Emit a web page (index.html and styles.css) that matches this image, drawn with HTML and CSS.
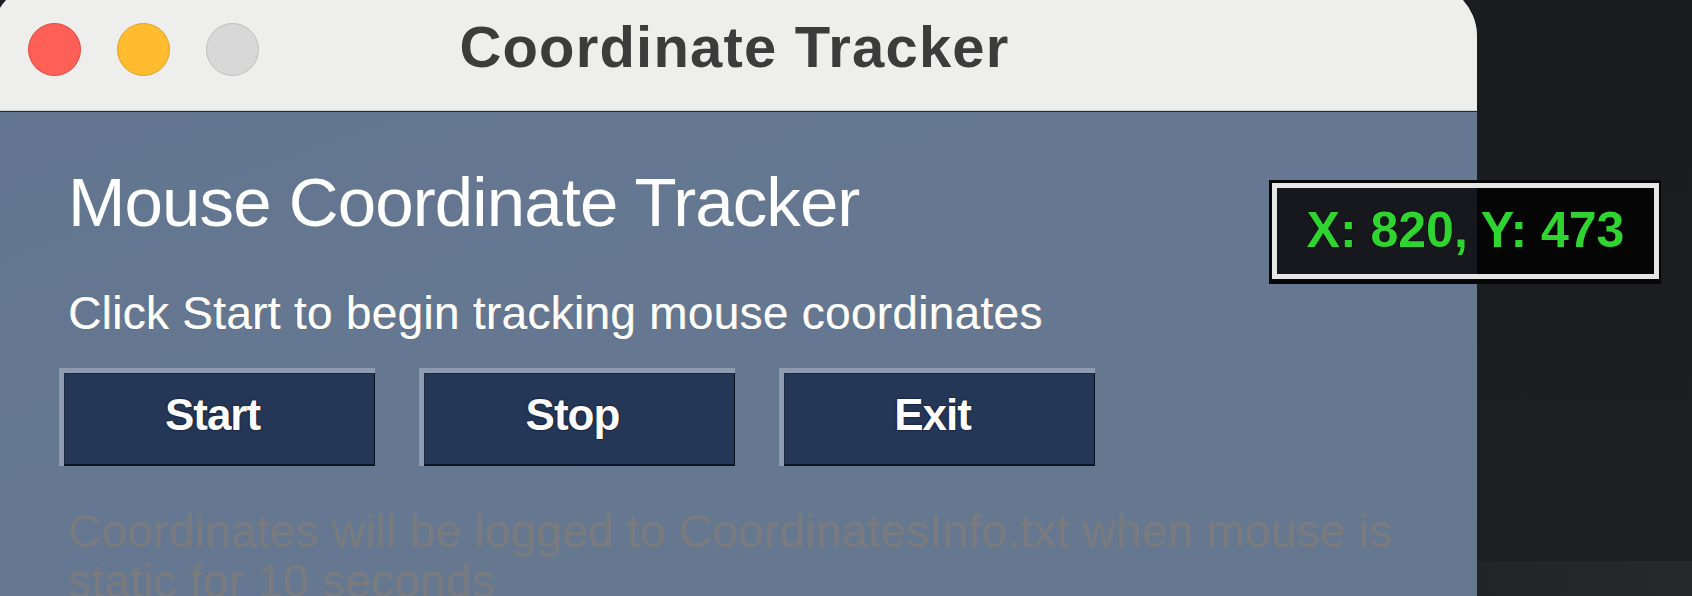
FILE: index.html
```html
<!DOCTYPE html>
<html lang="en">
<head>
<meta charset="utf-8">
<title>Coordinate Tracker</title>
<link rel="stylesheet" href="styles.css">
</head>
<body>
<div class="desk">
  <div class="window">
    <div class="titlebar">
      <div class="lights">
        <span class="light red"></span>
        <span class="light yellow"></span>
        <span class="light grey"></span>
      </div>
      <div class="wtitle">Coordinate Tracker</div>
      <div></div>
    </div>
    <div class="content">
      <h1 class="heading">Mouse Coordinate Tracker</h1>
      <p class="sub">Click Start to begin tracking mouse coordinates</p>
      <div class="buttons">
        <div class="btn">Start</div>
        <div class="btn">Stop</div>
        <div class="btn">Exit</div>
      </div>
      <p class="note">Coordinates will be logged to CoordinatesInfo.txt when mouse is static for 10 seconds</p>
    </div>
  </div>
  <div class="side">
    <div class="side-top"></div>
    <div class="side-band"></div>
  </div>
</div>
<div class="tip">
  <div class="tip-inner">X: 820, Y: 473</div>
</div>
</body>
</html>
```
FILE: styles.css
```css
html, body {
  margin: 0;
  padding: 0;
  width: 1692px;
  height: 596px;
  overflow: hidden;
  background: #1c1d20;
  font-family: "Liberation Sans", Arial, sans-serif;
}

.desk {
  display: flex;
  align-items: flex-start;
  height: 596px;
}

.window {
  flex: 0 0 1485px;
  width: 1485px;
  height: 613px;
  margin-top: -17px;
  margin-left: -8px;
  border-radius: 53px 53px 0 0;
  overflow: hidden;
  background: linear-gradient(160deg, #627590 0%, #667891 60%, #66788f 100%);
  box-shadow: 1px 0 0 #0e1116;
  display: flex;
  flex-direction: column;
}

.titlebar {
  height: 128px;
  flex: 0 0 128px;
  background: #eeeeed;
  border-bottom: 1px solid #cfcfcf;
  box-shadow: 0 1px 0 #1f2d44;
  display: grid;
  grid-template-columns: 1fr auto 1fr;
  align-items: center;
  padding-top: 4px;
  box-sizing: border-box;
  position: relative;
  z-index: 1;
}

.lights {
  display: flex;
  gap: 36px;
  padding-left: 36px;
  padding-top: 1px;
}

.light {
  width: 53px;
  height: 53px;
  border-radius: 50%;
  box-sizing: border-box;
}
.red { background: #fe5f57; border: 1px solid #e2463f; }
.yellow { background: #febc2e; border: 1px solid #dfa226; }
.grey { background: #d8d8d8; border: 1px solid #bfbfbf; }

.wtitle {
  font-weight: bold;
  font-size: 58px;
  letter-spacing: 1.2px;
  color: #3c3c3c;
  line-height: 66px;
  padding-bottom: 3px;
}

.content {
  padding: 52px 67px 0 67px;
  box-sizing: border-box;
}

.heading {
  margin: 0;
  padding-left: 9px;
  font-weight: normal;
  font-size: 69px;
  line-height: 80px;
  letter-spacing: -0.9px;
  color: #ffffff;
}

.sub {
  margin: 42px 0 0 0;
  padding-left: 9px;
  font-size: 46px;
  line-height: 56px;
  letter-spacing: 0.28px;
  color: #ffffff;
  text-shadow: 0 0 1px rgba(20, 30, 50, 0.6), 0.4px 0 0 #ffffff;
}

.buttons {
  margin-top: 27px;
  display: flex;
  gap: 44px;
}

.btn {
  width: 316px;
  height: 98px;
  box-sizing: border-box;
  border-top: 5px solid #8e9bb0;
  border-left: 5px solid #8e9bb0;
  background: #253757;
  box-shadow: inset -1px -2px 0 #0c1322, inset 1px 1px 0 #1a2842;
  display: flex;
  align-items: center;
  justify-content: center;
  padding-right: 14px;
  padding-bottom: 9px;
  color: #ffffff;
  font-weight: bold;
  font-size: 44px;
  letter-spacing: -1px;
  text-shadow: 0 0 2px #0a1020, 0 0 1px #0a1020;
}

.note {
  margin: 40px 0 0 0;
  padding-left: 9px;
  width: 1345px;
  font-size: 46px;
  line-height: 50px;
  letter-spacing: 0.24px;
  color: #797b7f;
}

.side {
  flex: 1;
  height: 596px;
  display: flex;
  flex-direction: column;
}
.side-top {
  height: 561px;
  background: linear-gradient(180deg, #1b1c1f, #1d1e21);
}
.side-band {
  flex: 1;
  background: linear-gradient(90deg, #222427, #26282b);
}

.tip {
  position: absolute;
  left: 1269px;
  top: 180px;
  width: 392px;
  height: 104px;
  box-sizing: border-box;
  padding: 3px 2px 5px 3px;
  background: #070708;
}
.tip-inner {
  height: 100%;
  box-sizing: border-box;
  border: 5px solid #e6e6e6;
  background: linear-gradient(90deg, #17181d 0px, #17181d 200px, #050505 200px, #050505 100%);
  display: flex;
  align-items: center;
  justify-content: center;
  color: #30d430;
  font-weight: bold;
  font-size: 50px;
  text-shadow: 0 0 2px #000;
  padding-bottom: 2px;
}
```
